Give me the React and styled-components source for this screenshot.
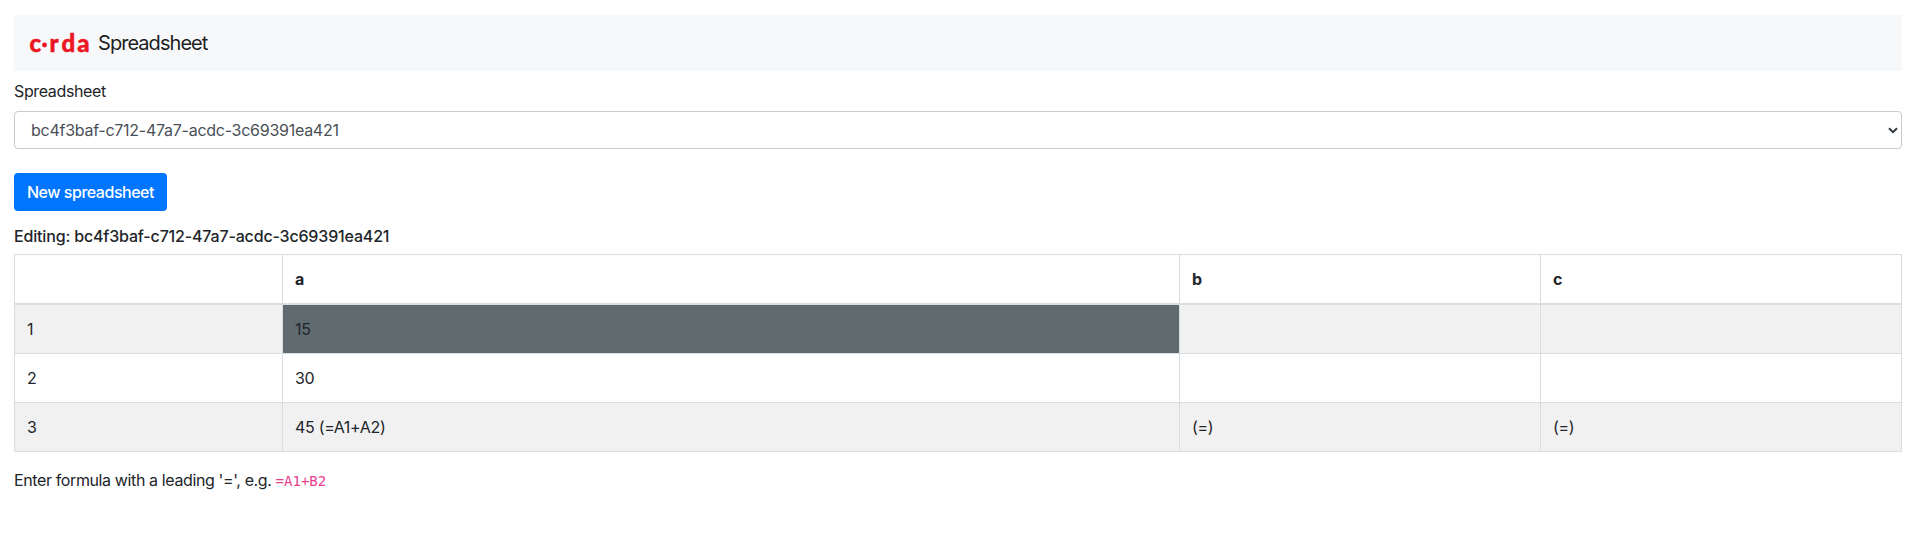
import React from "react";
import styled, { createGlobalStyle } from "styled-components";

const GlobalStyle = createGlobalStyle`
  *, *::before, *::after { box-sizing: border-box; }
  body {
    margin: 0;
    background: #fff;
    color: #212529;
    font: 400 16px/24px Inter, "Liberation Sans", sans-serif;
    letter-spacing: -0.3px;
  }
`;

const Page = styled.main`
  padding: 15px 15px 0 14px;
`;

const Navbar = styled.nav`
  display: flex;
  align-items: center;
  height: 56px;
  padding: 0 16px;
  background: #f7f8fa;
`;

const Logo = styled.svg`
  display: block;
  width: 60px;
  height: 24px;
  margin-right: 8px;
  overflow: visible;
  fill: #ec1622;
  font: 900 24px Lato, sans-serif;
  letter-spacing: 0;

  text {
    stroke: #ec1622;
    stroke-width: 0.5px;
  }
`;

const Brand = styled.span`
  color: rgba(0, 0, 0, 0.9);
  font-size: 20px;
  line-height: 30px;
  letter-spacing: -0.95px;
`;

const Label = styled.label`
  display: block;
  margin: 8px 0;
  letter-spacing: -0.36px;
`;

const SelectBox = styled.div`
  display: flex;
  align-items: center;
  justify-content: space-between;
  height: 38px;
  padding: 0 3px 0 16px;
  border: 1px solid #c4ccd4;
  border-radius: 4px;
  color: #495057;
  letter-spacing: -0.265px;
`;

const Button = styled.button`
  display: block;
  width: 153px;
  height: 38px;
  margin: 24px 0 13px;
  padding: 0;
  border: 0;
  border-radius: 4px;
  background: #0075ff;
  color: #fff;
  font: inherit;
  font-weight: 450;
  letter-spacing: -0.48px;
`;

const Heading = styled.h6`
  margin: 0 0 6px;
  font-size: 16px;
  font-weight: 500;
  line-height: 24px;
  letter-spacing: -0.17px;
`;

const Table = styled.table`
  width: 100%;
  table-layout: fixed;
  border-collapse: separate;
  border-spacing: 0;
  border-top: 1px solid #d8dde1;
  border-left: 1px solid #d8dde1;
`;

const Col = styled.col`
  width: ${(p) => p.$width}px;
`;

const HeadCell = styled.th`
  height: 50px;
  padding: 0 12px;
  border-right: 1px solid #d8dde1;
  border-bottom: 2px solid #d8dde1;
  text-align: left;
  font-weight: 700;
`;

const Row = styled.tr`
  background: ${(p) => (p.$striped ? "#f1f1f1" : "#fff")};
`;

const Cell = styled.td`
  height: 49px;
  padding: 0 12px;
  border-right: 1px solid #d8dde1;
  border-bottom: 1px solid #d8dde1;
  background: ${(p) => (p.$selected ? "#606b70" : "transparent")};
`;

const Help = styled.p`
  margin: 16px 0 0;
  letter-spacing: -0.38px;
`;

const Code = styled.code`
  color: #e83e8c;
  font: 14px "DejaVu Sans Mono", monospace;
  letter-spacing: 0;
`;

const SHEET_ID = "bc4f3baf-c712-47a7-acdc-3c69391ea421";
const ROWS = [
  ["1", "15", "", ""],
  ["2", "30", "", ""],
  ["3", "45 (=A1+A2)", "(=)", "(=)"],
];

export default function App() {
  return (
    <>
      <GlobalStyle />
      <Page>
        <Navbar>
          <Logo viewBox="0 0 60 24" aria-label="corda">
            <text x="-0.6 19.6 31.6 47.2" y="21">crda</text>
            <circle cx="14.5" cy="14" r="2.4" />
          </Logo>
          <Brand>Spreadsheet</Brand>
        </Navbar>
        <Label>Spreadsheet</Label>
        <SelectBox role="combobox">
          <span>{SHEET_ID}</span>
          <svg width="10" height="7" viewBox="0 0 10 7" fill="none" stroke="#343a40" strokeWidth="2">
            <path d="M1 1.2 5 5.2 9 1.2" />
          </svg>
        </SelectBox>
        <Button>New spreadsheet</Button>
        <Heading>Editing: {SHEET_ID}</Heading>
        <Table>
          <colgroup>
            <Col $width={268} />
            <Col $width={897} />
            <Col $width={361} />
            <Col $width={361} />
          </colgroup>
          <thead>
            <tr>
              {["", "a", "b", "c"].map((name) => (
                <HeadCell key={name}>{name}</HeadCell>
              ))}
            </tr>
          </thead>
          <tbody>
            {ROWS.map((cells, r) => (
              <Row key={r} $striped={r % 2 === 0}>
                {cells.map((value, c) => (
                  <Cell key={c} $selected={r === 0 && c === 1}>{value}</Cell>
                ))}
              </Row>
            ))}
          </tbody>
        </Table>
        <Help>
          Enter formula with a leading '=', e.g. <Code>=A1+B2</Code>
        </Help>
      </Page>
    </>
  );
}
